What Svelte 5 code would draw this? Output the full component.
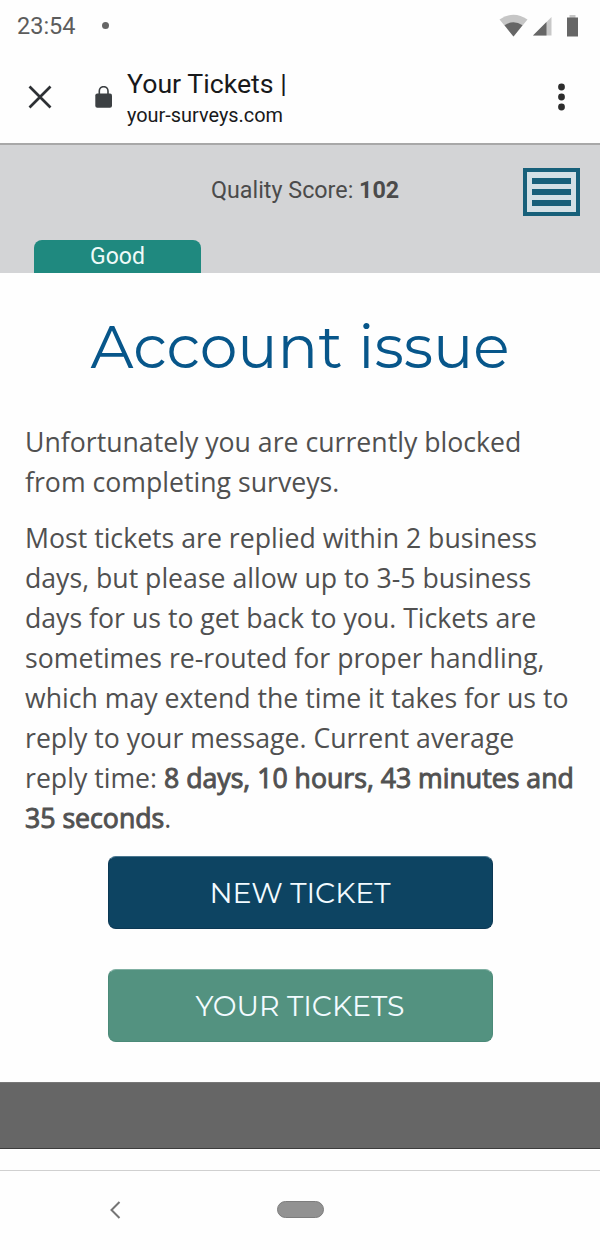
<script>
	let time = '23:54';
	let score = 102;
	let rating = 'Good';
	let replyTime = '8 days, 10 hours, 43 minutes and 35 seconds';
</script>

<div class="phone">
	<div class="status">
		<span class="time">{time}</span>
		<span class="dot"></span>
		<svg class="signals" width="80" height="24" viewBox="0 0 80 24">
			<path d="M0.500 5.500Q14.500 -4 28.500 5.500L14.500 22.500Z" fill="#c6c6c6" />
			<path d="M5.500 11.300Q14.500 5 23.500 11.300L14.500 22.500Z" fill="#666" />
			<path d="M34 21.500L52.500 3V21.500Z" fill="#c8c8c8" />
			<path d="M34 21.500L47.500 8V21.500Z" fill="#666" />
			<path d="M70.500 1h6v3h-6z" fill="#c6c6c6" />
			<path d="M68 3.500h11v19h-11z" fill="#666" />
		</svg>
	</div>

	<header>
		<svg class="close" width="24" height="24" viewBox="0 0 24 24">
			<path d="M1.500 1.500L22.500 22.500M22.500 1.500L1.500 22.500" fill="none" stroke="#2d3034" stroke-width="2.700" />
		</svg>
		<svg class="lock" width="18" height="22" viewBox="0 0 18 22">
			<rect x="0.300" y="7.500" width="16.700" height="14.200" rx="2" fill="#3c4043" />
			<path d="M4.300 8V5a4.350 4.350 0 0 1 8.700 0V8" fill="none" stroke="#3c4043" stroke-width="1.600" />
		</svg>
		<div class="page">
			<div class="title">Your Tickets |</div>
			<div class="url">your-surveys.com</div>
		</div>
		<svg class="more" width="8" height="28" viewBox="0 0 8 28">
			<circle cx="3.500" cy="4" r="3.400" />
			<circle cx="3.500" cy="14" r="3.400" />
			<circle cx="3.500" cy="24" r="3.400" />
		</svg>
	</header>

	<div class="score">
		<p>Quality Score: <b>{score}</b></p>
		<div class="menu">
			<span></span>
			<span></span>
			<span></span>
		</div>
		<div class="rating">{rating}</div>
	</div>

	<main>
		<h1>Account issue</h1>
		<p>Unfortunately you are currently blocked from completing surveys.</p>
		<p>
			Most tickets are replied within 2 business days, but please allow up to 3-5 business days for
			us to get back to you. Tickets are sometimes re-routed for proper handling, which may extend
			the time it takes for us to reply to your message. Current average reply time:
			<strong>{replyTime}</strong>.
		</p>
		<div class="actions">
			<button class="new">NEW TICKET</button>
			<button class="yours">YOUR TICKETS</button>
		</div>
	</main>

	<footer></footer>

	<nav>
		<svg class="back" width="12" height="18" viewBox="0 0 12 18">
			<path d="M10.500 1L2.500 9L10.500 17" fill="none" stroke="#757575" stroke-width="2" />
		</svg>
		<span class="home"></span>
	</nav>
</div>

<style>
	:global(body) {
		margin: 0;
		background: #fefefe;
	}

	.phone {
		width: 600px;
		height: 1250px;
		display: flex;
		flex-direction: column;
		overflow: hidden;
		font-family: Roboto, sans-serif;
		background: #fefefe;
	}

	.status {
		height: 52px;
		display: flex;
		align-items: center;
		padding: 0 21px 0 17px;
		box-sizing: border-box;
		color: #5c5c5c;
	}

	.time {
		font-size: 23.5px;
		width: 85px;
	}

	.dot {
		width: 7px;
		height: 7px;
		border-radius: 50%;
		background: #666;
		margin-top: -2px;
	}

	.signals {
		margin-left: auto;
		margin-top: -1px;
	}

	header {
		height: 91px;
		display: flex;
		padding: 0 34px 0 28px;
		box-sizing: border-box;
	}

	.close {
		margin-top: 33px;
	}

	.lock {
		margin: 34px 14px 0 43px;
	}

	.page {
		flex: 1;
		padding-top: 15px;
		color: #18191b;
	}

	.title {
		font-size: 26.7px;
		line-height: 34px;
	}

	.url {
		font-size: 19.9px;
		line-height: 29px;
	}

	.more {
		margin-top: 31px;
		fill: #2d2d2d;
	}

	.score {
		height: 130px;
		display: grid;
		grid-template-columns: 200px 1fr 57px;
		grid-template-rows: 95px 33px;
		box-sizing: border-box;
		border-top: 2px solid #a8a8a8;
		padding: 0 20px 0 0;
		background: #d3d4d6;
	}

	.score p {
		grid-column: 2;
		margin: 0;
		padding: 31px 0 0 11px;
		font-size: 23.3px;
		line-height: 28px;
		color: #4b4b4b;
	}

	.score b {
		font-weight: 700;
	}

	.menu {
		grid-column: 3;
		height: 48px;
		margin-top: 23px;
		box-sizing: border-box;
		border: 4px solid #17607a;
		padding: 6px 5px;
		display: flex;
		flex-direction: column;
		justify-content: space-between;
		background: #d3e0e5;
	}

	.menu span {
		height: 6px;
		background: #17607a;
	}

	.rating {
		grid-column: 1;
		margin-left: 34px;
		width: 167px;
		border-radius: 8px 8px 0 0;
		background: #1f897f;
		color: #eefaf8;
		font-size: 23px;
		line-height: 33px;
		text-align: center;
	}

	main {
		height: 809px;
		padding: 0 25px;
		font-family: 'Open Sans', sans-serif;
		color: #505050;
	}

	h1 {
		margin: 0;
		padding: 39px 0 40px;
		text-align: center;
		font: 400 60px/70px Montserrat, sans-serif;
		color: #07568a;
	}

	main p {
		margin: 0 -5px 16px 0;
		font-size: 26.67px;
		line-height: 40px;
	}

	/* thickened regular weight, keeps the widths of the body text */
	strong {
		font-weight: 400;
		-webkit-text-stroke: 1px #545454;
	}

	.actions {
		display: flex;
		flex-direction: column;
		align-items: center;
		gap: 40px;
		padding-top: 2px;
	}

	button {
		width: 385px;
		height: 73px;
		border: 1px solid #0b3854;
		border-top-color: #4a7790;
		border-radius: 8px;
		padding: 0;
		font: 400 28.4px Montserrat, sans-serif;
		color: #f2fbff;
	}

	.new {
		background: #0d4462;
	}

	.yours {
		background: #539280;
		border-color: #4b8a78;
		border-top-color: #80b0a3;
	}

	footer {
		height: 67px;
		box-sizing: border-box;
		background: #666;
		border-top: 1px solid #777;
		border-bottom: 1px solid #3c3c3c;
	}

	nav {
		flex: 1;
		display: flex;
		align-items: center;
		margin-top: 21px;
		border-top: 1px solid #d0d0d0;
		padding: 0 0 2px 109px;
	}

	.home {
		width: 47px;
		height: 17px;
		box-sizing: border-box;
		border: 1px solid #7d7d7d;
		border-radius: 9px;
		margin-left: 156px;
		background: #929292;
	}
</style>
